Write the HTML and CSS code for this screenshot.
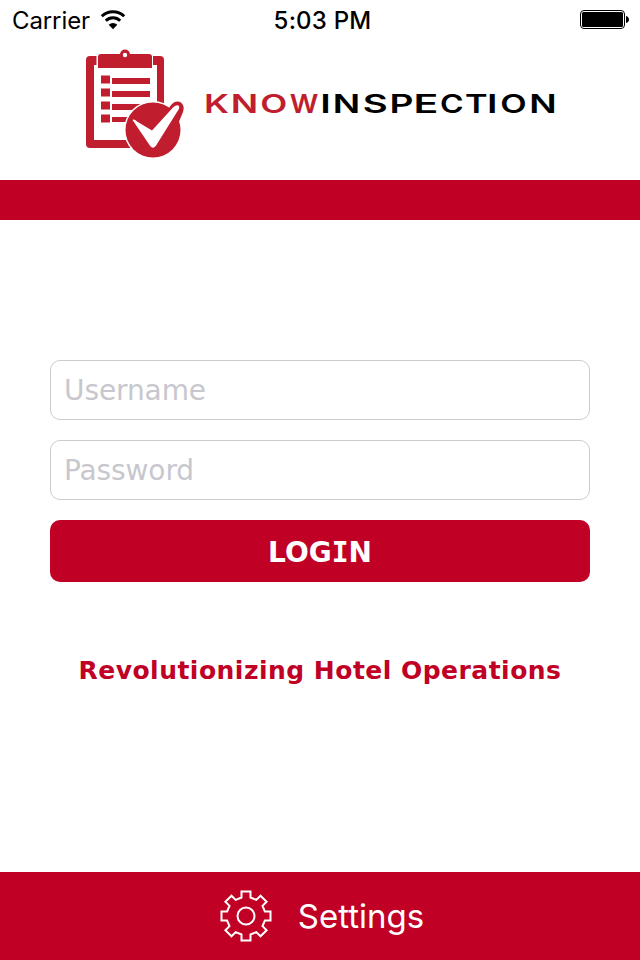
FILE: index.html
```html
<!DOCTYPE html>
<html lang="en">
<head>
    <meta charset="UTF-8">
    <meta name="viewport" content="width=device-width, initial-scale=1.0">
    <title>KnowInspection</title>
    <link rel="stylesheet" href="styles.css">
</head>
<body>
    <div class="status-bar">
        <div class="carrier">
            <span>Carrier</span>
            <svg class="wifi" width="26" height="20" viewBox="0 0 26 20">
                <path d="M1.800 6.200a16 16 0 0 1 22.400 0M5.800 10.800a10.300 10.300 0 0 1 14.400 0" fill="none" stroke="#000" stroke-width="3"/>
                <path d="M13 19.200l-4.300-4.400a6.200 6.200 0 0 1 8.600 0z"/>
            </svg>
        </div>
        <div class="time">5:03 PM</div>
        <svg class="battery" width="50" height="20" viewBox="0 0 50 20">
            <rect x=".5" y=".5" width="44" height="18" rx="3.5" fill="none" stroke="#000"/>
            <rect x="2" y="2" width="41" height="15" rx="1.5"/>
            <path d="M46 6c4 1 4 6 0 7z"/>
        </svg>
    </div>

    <header class="header">
        <svg class="logo" width="480" height="116" viewBox="80 44 480 116">
            <!-- clipboard -->
            <g fill="#c01e2e">
                <path fill-rule="evenodd" d="M90 56h70q4 0 4 4v84q0 4-4 4H90q-4 0-4-4V60q0-4 4-4zM94 65v75h63V65z"/>
                <path d="M96.500 53h56.500v17H96.500z" fill="#fff"/>
                <path d="M98 57q0-3 3-3h48q3 0 3 3v11H98z"/>
                <circle cx="125" cy="54.500" r="5"/>
                <circle cx="125" cy="55" r="2.200" fill="#fff"/>
                <path d="M101 75.500h9v8h-9zM101 88.500h9v8h-9zM101 101.500h9v8h-9zM101 114.500h9v8h-9zM112 78h38v6h-38zM112 91h38v6h-38zM112 104h30v6h-30zM112 117h20v5h-20z"/>
            </g>
            <!-- check badge -->
            <circle cx="153" cy="130" r="29" fill="#fff"/>
            <path d="M166 106L174 102Q180 100 184 106L180 120z" fill="#fff"/>
            <circle cx="153" cy="130" r="27.500" fill="#c01e2e"/>
            <path d="M168 109L172 104Q176 100 181 102.500Q185 106 183 112L178 124z" fill="#c01e2e"/>
            <path d="M132.500 120Q134 118.500 137 121.500L152 130.500L173 107.500Q177 104 179 106Q180 108 177 112L157 144Q153 151 149.500 145z" fill="#fff"/>
            <!-- wordmark, every letter stretched to its own width -->
            <g class="wordmark" fill="#c01e2e">
                <text x="204" y="112.500" textLength="25" lengthAdjust="spacingAndGlyphs">K</text>
                <text x="230.800" y="112.500" textLength="27.400" lengthAdjust="spacingAndGlyphs">N</text>
                <text x="260.200" y="112.500" textLength="27" lengthAdjust="spacingAndGlyphs">O</text>
                <text x="289.700" y="112.500" textLength="28.600" lengthAdjust="spacingAndGlyphs">W</text>
            </g>
            <g class="wordmark">
                <text x="320.200" y="112.500" textLength="10.500" lengthAdjust="spacingAndGlyphs">I</text>
                <text x="332.800" y="112.500" textLength="27.400" lengthAdjust="spacingAndGlyphs">N</text>
                <text x="362.800" y="112.500" textLength="25" lengthAdjust="spacingAndGlyphs">S</text>
                <text x="389.600" y="112.500" textLength="24" lengthAdjust="spacingAndGlyphs">P</text>
                <text x="413.500" y="112.500" textLength="24.800" lengthAdjust="spacingAndGlyphs">E</text>
                <text x="440" y="112.500" textLength="23.600" lengthAdjust="spacingAndGlyphs">C</text>
                <text x="465" y="112.500" textLength="22.600" lengthAdjust="spacingAndGlyphs">T</text>
                <text x="487" y="112.500" textLength="10.500" lengthAdjust="spacingAndGlyphs">I</text>
                <text x="500.300" y="112.500" textLength="26.400" lengthAdjust="spacingAndGlyphs">O</text>
                <text x="529.300" y="112.500" textLength="27.400" lengthAdjust="spacingAndGlyphs">N</text>
            </g>
        </svg>
    </header>
    <div class="band"></div>

    <form class="login">
        <input class="field" type="text" placeholder="Username">
        <input class="field" type="password" placeholder="Password">
        <button class="login-btn" type="button">LOG<span class="serif-i">I</span>N</button>
        <p class="tagline">Revolutionizing Hotel Operations</p>
    </form>

    <footer class="footer">
        <svg class="gear" width="52" height="52" viewBox="-26 -26 52 52">
            <path d="M-4.500-24.500h9v6l5.800 2.400 4.200-4.200 6.100 6.100-4.100 4.100 2.400 5.600h5.600v9h-5.600l-2.400 5.600 4.100 4.100-6.100 6.100-4.200-4.200-5.800 2.400v6h-9v-6l-5.800-2.400-4.200 4.200-6.100-6.100 4.100-4.100-2.400-5.600h-5.600v-9h5.600l2.400-5.600-4.100-4.100 6.100-6.100 4.200 4.200 5.800-2.400z"/>
            <circle r="8.500"/>
        </svg>
        <span>Settings</span>
    </footer>
</body>
</html>
```
FILE: styles.css
```css
* {
    box-sizing: border-box;
}
body {
    margin: 0;
    height: 960px;
    display: flex;
    flex-direction: column;
    background: #fff;
    font-family: Inter, sans-serif;
    overflow: hidden;
}
.status-bar {
    height: 40px;
    padding: 0 10px 0 12px;
    display: grid;
    grid-template-columns: 1fr auto 1fr;
    align-items: center;
    font-size: 24px;
}
.carrier {
    display: flex;
    align-items: center;
    gap: 10px;
    letter-spacing: -0.1px;
}
.time {
    padding: 1px 0 0 3px;
    font-weight: 500;
    letter-spacing: 0.2px;
}
.battery {
    justify-self: end;
}
.header {
    height: 140px;
    padding: 4px 0 0 80px;
}
.logo {
    display: block;
}
.wordmark {
    font-family: Inter, sans-serif;
    font-weight: 600;
    font-size: 25px;
}
.band {
    height: 40px;
    background: #c00025;
}
.login {
    flex: 1;
    padding: 140px 50px 0;
    display: flex;
    flex-direction: column;
    font-family: "DejaVu Sans", sans-serif;
}
.field {
    height: 60px;
    margin: 0 0 20px;
    padding: 0 13px;
    border: 1px solid #ccc;
    border-radius: 10px;
    background: #fff;
    font-family: inherit;
    font-size: 28px;
    letter-spacing: -0.1px;
}
.field::placeholder {
    color: #c7c7cd;
}
.login-btn {
    height: 62px;
    padding: 2px 0 0;
    border: 0;
    border-radius: 10px;
    background: #c00025;
    color: #fff;
    font-family: inherit;
    font-size: 28px;
    font-weight: bold;
}
.serif-i {
    font-family: "DejaVu Sans Mono", monospace;
}
.tagline {
    margin: 73px 0 0;
    color: #c00025;
    font-size: 25px;
    font-weight: bold;
    letter-spacing: 0.48px;
    line-height: 32px;
    text-align: center;
    white-space: nowrap;
}
.footer {
    height: 88px;
    padding-left: 4px;
    display: flex;
    align-items: center;
    justify-content: center;
    gap: 26px;
    background: #c00025;
    color: #fff;
    font-size: 33px;
}
.gear {
    fill: none;
    stroke: #fff;
    stroke-width: 2;
}
```
